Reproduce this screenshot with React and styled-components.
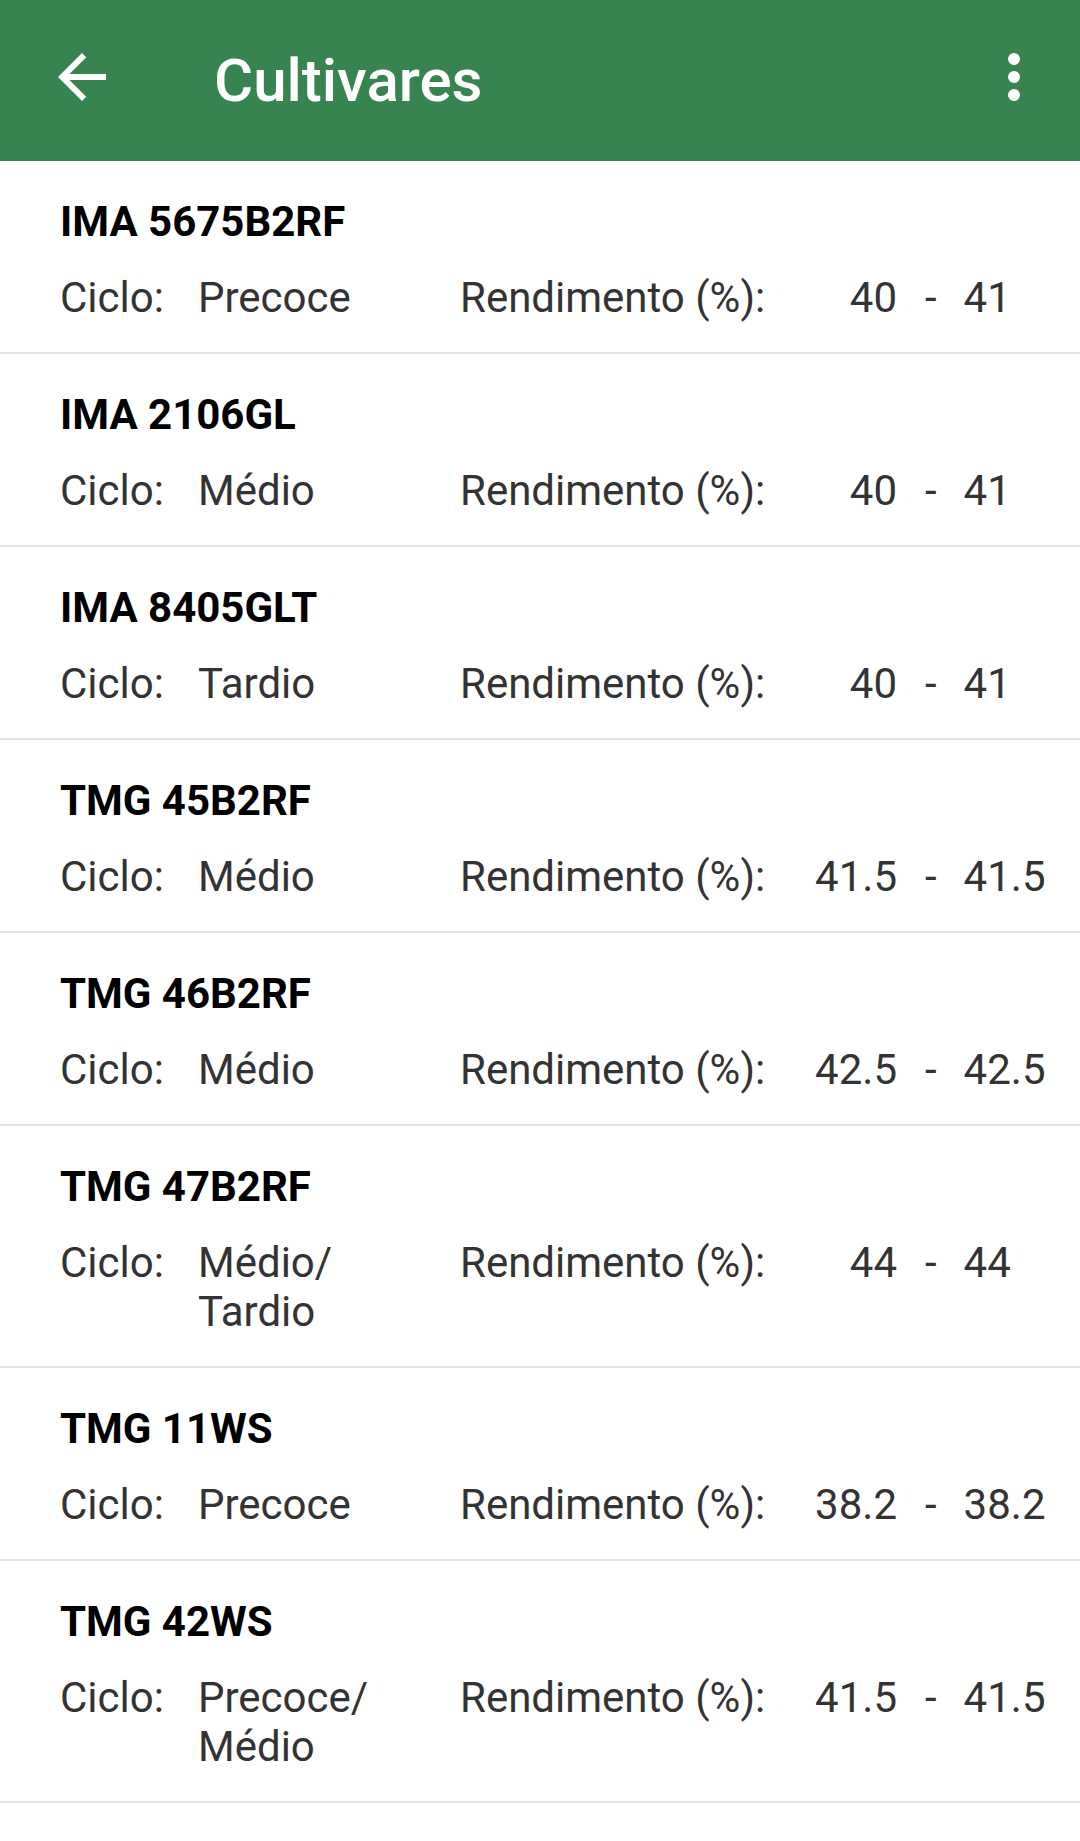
import React from "react";
import styled, { createGlobalStyle } from "styled-components";

const GlobalStyle = createGlobalStyle`
  html, body {
    margin: 0;
    padding: 0;
    background: #ffffff;
  }
  body {
    font-family: Roboto, "Noto Sans", "Liberation Sans", sans-serif;
    -webkit-font-smoothing: antialiased;
  }
  * { box-sizing: border-box; }
`;

const Page = styled.div`
  width: 1080px;
  min-height: 1841px;
  background: #ffffff;
`;

const AppBar = styled.header`
  height: 161px;
  background: #378451;
  display: flex;
  align-items: center;
  padding: 0 30px 0 46px;
`;

const IconButton = styled.div`
  width: 72px;
  height: 72px;
  margin-top: -7px;
  display: flex;
  align-items: center;
  justify-content: center;
  flex-shrink: 0;
  svg {
    display: block;
    width: 72px;
    height: 72px;
    fill: #ffffff;
  }
`;

const Title = styled.h1`
  flex: 1;
  margin: 0 0 0 96px;
  font-family: Roboto, "Noto Sans", sans-serif;
  font-weight: 500;
  font-size: 60px;
  line-height: 68px;
  color: #ffffff;
  letter-spacing: 0;
`;

const List = styled.ul`
  list-style: none;
  margin: 0;
  padding: 0;
`;

const Item = styled.li`
  padding: 37px 0 30px 60px;
  border-bottom: 2px solid #e3e3e3;
`;

const Name = styled.div`
  font-family: Roboto, "Noto Sans", sans-serif;
  font-weight: 700;
  font-size: 42px;
  line-height: 47px;
  color: #000000;
  margin-bottom: 28px;
`;

const Details = styled.div`
  display: flex;
  align-items: flex-start;
  font-family: Roboto, "Noto Sans", sans-serif;
  font-weight: 400;
  font-size: 42px;
  line-height: 49px;
  color: #333333;
`;

const Label = styled.span`
  width: ${(p) => p.$width}px;
  flex-shrink: 0;
  white-space: nowrap;
`;

const CicloValue = styled.span`
  width: 220px;
  margin-right: 42px;
  flex-shrink: 0;
`;

const Low = styled.span`
  width: 110px;
  text-align: right;
  flex-shrink: 0;
`;

const Dash = styled.span`
  margin: 0 27px 0 28px;
`;

const High = styled.span`
  flex-shrink: 0;
`;

const BackIcon = () => (
  <svg viewBox="0 0 24 24" aria-hidden="true">
    <path d="M20 11H7.83l5.59-5.59L12 4l-8 8 8 8 1.41-1.41L7.83 13H20v-2z" />
  </svg>
);

const MoreIcon = () => (
  <svg viewBox="0 0 24 24" aria-hidden="true">
    <circle cx="12" cy="6" r="2" />
    <circle cx="12" cy="12" r="2" />
    <circle cx="12" cy="18" r="2" />
  </svg>
);

const cultivares = [
  { name: "IMA 5675B2RF", ciclo: "Precoce", min: "40", max: "41" },
  { name: "IMA 2106GL", ciclo: "Médio", min: "40", max: "41" },
  { name: "IMA 8405GLT", ciclo: "Tardio", min: "40", max: "41" },
  { name: "TMG 45B2RF", ciclo: "Médio", min: "41.5", max: "41.5" },
  { name: "TMG 46B2RF", ciclo: "Médio", min: "42.5", max: "42.5" },
  { name: "TMG 47B2RF", ciclo: "Médio/Tardio", min: "44", max: "44" },
  { name: "TMG 11WS", ciclo: "Precoce", min: "38.2", max: "38.2" },
  { name: "TMG 42WS", ciclo: "Precoce/Médio", min: "41.5", max: "41.5" },
];

const renderCiclo = (text) => {
  const parts = text.split("/");
  return parts.map((part, i) => (
    <React.Fragment key={i}>
      {part}
      {i < parts.length - 1 ? (
        <>
          /<wbr />
        </>
      ) : null}
    </React.Fragment>
  ));
};

export default function App() {
  return (
    <>
      <GlobalStyle />
      <Page>
        <AppBar>
          <IconButton>
            <BackIcon />
          </IconButton>
          <Title>Cultivares</Title>
          <IconButton>
            <MoreIcon />
          </IconButton>
        </AppBar>
        <List>
          {cultivares.map((c) => (
            <Item key={c.name}>
              <Name>{c.name}</Name>
              <Details>
                <Label $width={138}>Ciclo:</Label>
                <CicloValue>{renderCiclo(c.ciclo)}</CicloValue>
                <Label $width={327}>Rendimento (%):</Label>
                <Low>{c.min}</Low>
                <Dash>-</Dash>
                <High>{c.max}</High>
              </Details>
            </Item>
          ))}
        </List>
      </Page>
    </>
  );
}
